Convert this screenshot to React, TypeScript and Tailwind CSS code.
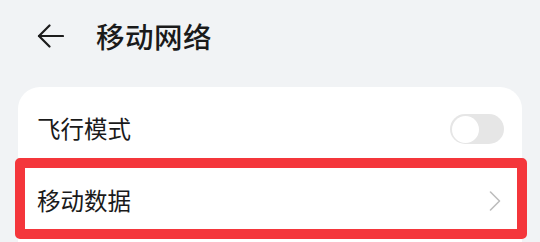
import React from "react";

export default function App() {
  const font = { fontFamily: '"Noto Sans CJK SC", "Noto Sans", sans-serif' };
  return (
    <div className="w-[540px] h-[242px] overflow-hidden bg-[#f1f3f5]" style={font}>
      <div className="h-[72px] flex items-center pl-[37px]">
        <svg width="27" height="24" viewBox="0 0 27 24" fill="none" stroke="#1c1c1c" strokeWidth="2.2" strokeLinecap="round" strokeLinejoin="round">
          <path d="M2 12 H26" />
          <path d="M12.5 1.5 L2 12 L12.5 22.5" />
        </svg>
        <span className="ml-[32px] text-[28.5px] font-medium text-[#1a1a1a] leading-none tracking-[0.5px]">移动网络</span>
      </div>
      <div className="relative mt-[15px] ml-[18px] w-[504px] bg-white rounded-[22px] pt-[6px]">
        <div className="h-[72px] flex items-center justify-between pl-[19px] pr-[18px]">
          <span className="text-[23.5px] text-[#1a1a1a] leading-none">飞行模式</span>
          <div className="w-[54px] h-[30px] rounded-full bg-[#e6e6e6] p-[1.5px] flex items-center">
            <div className="w-[27px] h-[27px] rounded-full bg-white" />
          </div>
        </div>
        <div className="h-[72px] flex items-center justify-between pl-[19px] pr-[21px]">
          <span className="text-[23.5px] text-[#1a1a1a] leading-none">移动数据</span>
          <svg width="12" height="20" viewBox="0 0 12 20" fill="none" stroke="#bdbdbd" strokeWidth="1.6" strokeLinecap="round" strokeLinejoin="round">
            <path d="M1.5 1 L10.5 10 L1.5 19" />
          </svg>
        </div>
        <div className="h-[40px]" />
        <div className="absolute left-[-3px] top-[71px] w-[512px] h-[81px] border-[10px] border-[#f4363b] rounded-[5px]" />
      </div>
    </div>
  );
}
